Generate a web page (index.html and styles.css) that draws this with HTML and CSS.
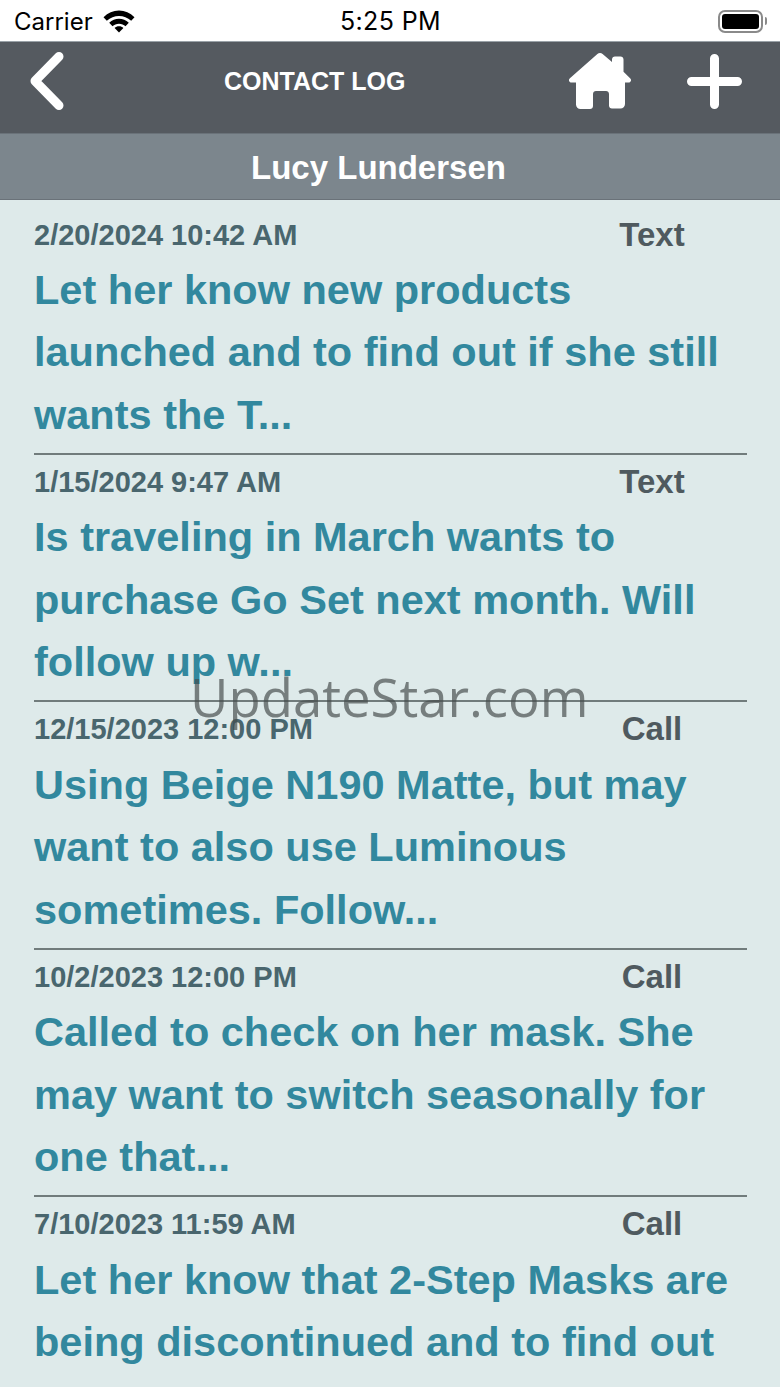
FILE: index.html

```html
<!DOCTYPE html>
<html lang="en">
<head>
  <meta charset="UTF-8">
  <title>Contact Log</title>
  <link rel="stylesheet" href="styles.css">
</head>
<body>

<div class="status-bar">
  <div class="status-left">
    <span>Carrier</span>
    <svg class="wifi" width="32" height="24" viewBox="0 0 32 24">
      <path d="M16 1.500C10 1.500 5 3.800 .5 8.200l3.300 3.600C7.400 8.600 11.500 6.900 16 6.900s8.600 1.700 12.200 4.900l3.300-3.600C27 3.800 22 1.500 16 1.500z"/>
      <path d="M16 9.800c-3.700 0-7 1.400-9.800 4l3.300 3.500c1.700-1.600 3.900-2.500 6.500-2.500s4.800.9 6.500 2.500l3.300-3.500c-2.800-2.600-6.100-4-9.800-4z"/>
      <path d="M16 17.200c-1.800 0-3.300.7-4.400 1.700l4.400 4.600 4.400-4.600c-1.100-1-2.600-1.700-4.400-1.700z"/>
    </svg>
  </div>
  <div class="status-time">5:25 PM</div>
  <div class="status-right">
    <div class="battery"><div class="battery-fill"></div></div>
    <div class="battery-cap"></div>
  </div>
</div>

<div class="nav-bar">
  <svg class="back-icon" width="36" height="58" viewBox="0 0 36 58">
    <path d="M30 4.500 6 29l24 24.500" fill="none" stroke="#fff" stroke-width="9" stroke-linecap="round" stroke-linejoin="round"/>
  </svg>
  <div class="nav-title">CONTACT LOG</div>
  <svg class="home-icon" width="64" height="56" viewBox="0 0 64 56">
    <path fill="#fff" d="M32 0c1 0 1.900.4 2.600 1L44 9V6.500c0-1.700 1.300-3 3-3h5.500c1.700 0 3 1.300 3 3v12.300l6.600 6.400c1.800 1.600.8 4.300-1.500 4.300H57v21.500c0 2.600-2 4.500-4.500 4.500H44c-1.700 0-3-1.300-3-3V41c0-1.700-1.300-3-3-3H28c-1.700 0-3 1.300-3 3v12c0 1.700-1.300 3-3 3h-9.500C10 56 8 54.100 8 51.500V29.500H3.400c-2.300 0-3.300-2.700-1.500-4.300L29.400 1c.7-.6 1.600-1 2.600-1z"/>
  </svg>
  <svg class="plus-icon" width="55" height="55" viewBox="0 0 55 55">
    <path d="M27.500 4.500v46M4.500 27.500h46" fill="none" stroke="#fff" stroke-width="9" stroke-linecap="round"/>
  </svg>
</div>

<div class="name-bar">Lucy Lundersen</div>

<div class="log-list">
  <div class="log-row">
    <div class="log-head"><span class="log-date">2/20/2024 10:42 AM</span><span class="log-type">Text</span></div>
    <div class="log-note">Let her know new products<br>launched and to find out if she still<br>wants the T...</div>
  </div>
  <div class="log-row">
    <div class="log-head"><span class="log-date">1/15/2024 9:47 AM</span><span class="log-type">Text</span></div>
    <div class="log-note">Is traveling in March wants to<br>purchase Go Set next month. Will<br>follow up w...</div>
  </div>
  <div class="log-row">
    <div class="log-head"><span class="log-date">12/15/2023 12:00 PM</span><span class="log-type">Call</span></div>
    <div class="log-note">Using Beige N190 Matte, but may<br>want to also use Luminous<br>sometimes. Follow...</div>
  </div>
  <div class="log-row">
    <div class="log-head"><span class="log-date">10/2/2023 12:00 PM</span><span class="log-type">Call</span></div>
    <div class="log-note">Called to check on her mask. She<br>may want to switch seasonally for<br>one that...</div>
  </div>
  <div class="log-row">
    <div class="log-head"><span class="log-date">7/10/2023 11:59 AM</span><span class="log-type">Call</span></div>
    <div class="log-note">Let her know that 2-Step Masks are<br>being discontinued and to find out</div>
  </div>
</div>

<div class="watermark">UpdateStar.com</div>

</body>
</html>
```

FILE: styles.css

```css
html, body {
  margin: 0;
  padding: 0;
}
body {
  position: relative;
  width: 780px;
  height: 1387px;
  overflow: hidden;
  background-color: #deeaea;
  font-family: "Liberation Sans", Arial, sans-serif;
}
.status-bar {
  display: grid;
  grid-template-columns: 1fr auto 1fr;
  align-items: center;
  height: 41px;
  padding: 1px 13px 0 14px;
  box-sizing: border-box;
  background-color: #fff;
  color: #000;
  font-family: Inter, sans-serif;
  font-size: 24px;
}
.status-left {
  display: flex;
  align-items: center;
  gap: 10px;
}
.status-time {
  font-size: 25px;
  letter-spacing: 0.4px;
}
.status-right {
  display: flex;
  align-items: center;
  justify-content: flex-end;
  gap: 2px;
}
.battery {
  box-sizing: border-box;
  width: 45px;
  height: 23px;
  padding: 2px;
  border: 2px solid #8a8a8a;
  border-radius: 7px;
}
.battery-fill {
  height: 100%;
  background-color: #000;
  border-radius: 3px;
}
.battery-cap {
  width: 2px;
  height: 8px;
  background-color: #8a8a8a;
  border-radius: 0 2px 2px 0;
}
.nav-bar {
  display: flex;
  align-items: center;
  box-sizing: border-box;
  height: 92px;
  border-top: 1px solid #9aa2a8;
  padding: 0 0 13px 29px;
  background-color: #555a60;
}
.nav-title {
  width: 181px;
  margin-left: 159px;
  color: #fff;
  font-size: 25px;
  font-weight: bold;
  white-space: nowrap;
}
.home-icon {
  margin-left: 163px;
}
.plus-icon {
  margin-left: 55px;
}
.name-bar {
  height: 65px;
  padding-right: 23px;
  line-height: 67px;
  border-top: 1px solid #6a7279;
  border-bottom: 1px solid #6a7279;
  background-color: #7c868d;
  color: #fff;
  font-size: 33px;
  font-weight: bold;
  text-align: center;
}
.log-list {
  padding: 5.6px 33px 0 34px;
}
.log-row {
  box-sizing: border-box;
  height: 247.4px;
  border-top: 2px solid #717c7c;
}
.log-row:first-child {
  border-top-color: transparent;
}
.log-head {
  display: flex;
  justify-content: space-between;
  align-items: center;
  height: 55px;
  color: #49666e;
  font-weight: bold;
}
.log-date {
  font-size: 29px;
}
.log-type {
  width: 130px;
  margin-right: 30px;
  margin-top: -1px;
  color: #4f5a5f;
  font-size: 33px;
  text-align: center;
}
.log-note {
  margin-top: -3.6px;
  color: #32889e;
  font-size: 41.5px;
  font-weight: bold;
  line-height: 62.4px;
  white-space: nowrap;
}
.watermark {
  position: absolute;
  left: 190px;
  top: 662px;
  color: rgba(70, 75, 75, 0.68);
  font-family: "Open Sans", sans-serif;
  font-size: 52.7px;
  line-height: 70px;
}
```
